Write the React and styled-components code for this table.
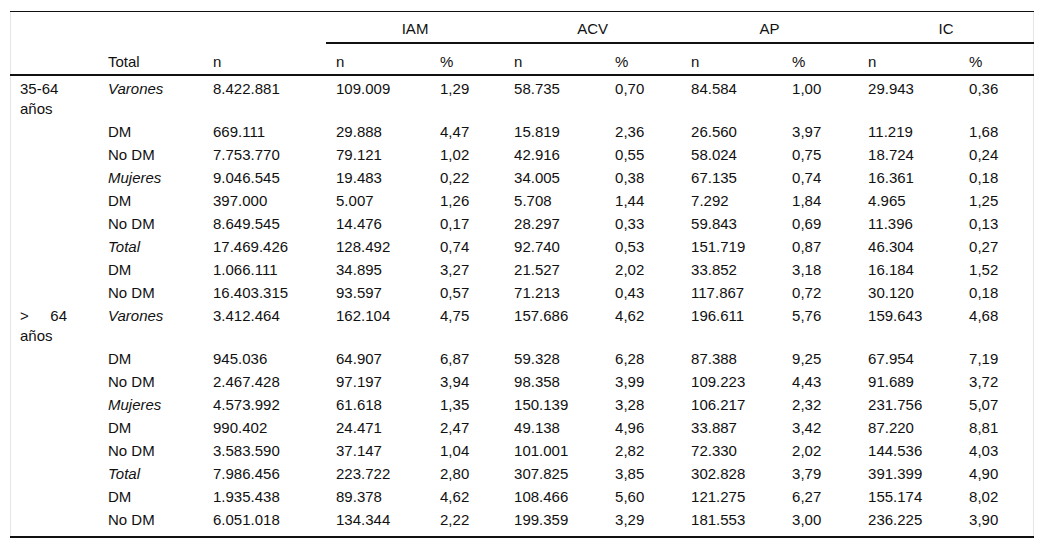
import React from 'react'
import styled, { createGlobalStyle } from 'styled-components'

const GlobalStyle = createGlobalStyle`
body {
    margin: 0;
    background: #fff;
    font-family: "Liberation Sans", Arial, sans-serif;
    color: #111;
}
`

const widths = [88, 105, 123, 104, 74, 101, 76, 101, 76, 101, 75]
const groups = ['IAM', 'ACV', 'AP', 'IC']

const rows = [
    ['35-64 años', 'Varones', '8.422.881', '109.009', '1,29', '58.735', '0,70', '84.584', '1,00', '29.943', '0,36'],
    ['', 'DM', '669.111', '29.888', '4,47', '15.819', '2,36', '26.560', '3,97', '11.219', '1,68'],
    ['', 'No DM', '7.753.770', '79.121', '1,02', '42.916', '0,55', '58.024', '0,75', '18.724', '0,24'],
    ['', 'Mujeres', '9.046.545', '19.483', '0,22', '34.005', '0,38', '67.135', '0,74', '16.361', '0,18'],
    ['', 'DM', '397.000', '5.007', '1,26', '5.708', '1,44', '7.292', '1,84', '4.965', '1,25'],
    ['', 'No DM', '8.649.545', '14.476', '0,17', '28.297', '0,33', '59.843', '0,69', '11.396', '0,13'],
    ['', 'Total', '17.469.426', '128.492', '0,74', '92.740', '0,53', '151.719', '0,87', '46.304', '0,27'],
    ['', 'DM', '1.066.111', '34.895', '3,27', '21.527', '2,02', '33.852', '3,18', '16.184', '1,52'],
    ['', 'No DM', '16.403.315', '93.597', '0,57', '71.213', '0,43', '117.867', '0,72', '30.120', '0,18'],
    ['> 64 años', 'Varones', '3.412.464', '162.104', '4,75', '157.686', '4,62', '196.611', '5,76', '159.643', '4,68'],
    ['', 'DM', '945.036', '64.907', '6,87', '59.328', '6,28', '87.388', '9,25', '67.954', '7,19'],
    ['', 'No DM', '2.467.428', '97.197', '3,94', '98.358', '3,99', '109.223', '4,43', '91.689', '3,72'],
    ['', 'Mujeres', '4.573.992', '61.618', '1,35', '150.139', '3,28', '106.217', '2,32', '231.756', '5,07'],
    ['', 'DM', '990.402', '24.471', '2,47', '49.138', '4,96', '33.887', '3,42', '87.220', '8,81'],
    ['', 'No DM', '3.583.590', '37.147', '1,04', '101.001', '2,82', '72.330', '2,02', '144.536', '4,03'],
    ['', 'Total', '7.986.456', '223.722', '2,80', '307.825', '3,85', '302.828', '3,79', '391.399', '4,90'],
    ['', 'DM', '1.935.438', '89.378', '4,62', '108.466', '5,60', '121.275', '6,27', '155.174', '8,02'],
    ['', 'No DM', '6.051.018', '134.344', '2,22', '199.359', '3,29', '181.553', '3,00', '236.225', '3,90'],
]

const italicLabels = ['Varones', 'Mujeres', 'Total']

function App() {
    return (
        <>
            <GlobalStyle />
            <Frame>
                <Table>
                    <colgroup>
                        {widths.map((w, i) => <col key={i} style={{ width: w }} />)}
                    </colgroup>
                    <thead>
                        <tr>
                            <GroupHead colSpan={3} />
                            {groups.map(g => (
                                <GroupHead key={g} colSpan={2} underline>{g}</GroupHead>
                            ))}
                        </tr>
                        <HeadRow>
                            <Head />
                            <Head>Total</Head>
                            <Head>n</Head>
                            {groups.map(g => (
                                <React.Fragment key={g}>
                                    <Head>n</Head>
                                    <Head>%</Head>
                                </React.Fragment>
                            ))}
                        </HeadRow>
                    </thead>
                    <tbody>
                        {rows.map((row, r) => (
                            <BodyRow key={r}>
                                <AgeCell>{row[0]}</AgeCell>
                                <Cell italic={italicLabels.includes(row[1])}>{row[1]}</Cell>
                                {row.slice(2).map((v, i) => <Cell key={i}>{v}</Cell>)}
                            </BodyRow>
                        ))}
                    </tbody>
                </Table>
            </Frame>
        </>
    )
}

const Frame = styled.div`
margin: 11px 0 0 10px;
width: 1024px;
box-shadow: inset 1px 0 0 #e6e6e6, inset -1px 0 0 #e6e6e6;
`
const Table = styled.table`
width: 100%;
table-layout: fixed;
border-collapse: collapse;
border-top: 1px solid #111;
border-bottom: 2px solid #111;
font-size: 15px;
line-height: 20px;
`
const Head = styled.th`
font-weight: normal;
text-align: left;
padding: 8px 10px 2px;
`
const GroupHead = styled.th`
font-weight: normal;
text-align: center;
padding: 7px 10px 3px;
border-bottom: ${p => (p.underline ? '2px solid #111' : 'none')};
`
const HeadRow = styled.tr`
border-bottom: 2px solid #111;
`
const BodyRow = styled.tr`
    &:last-child td {
        padding-bottom: 6px;
    }
`
const Cell = styled.td`
padding: 3px 10px 0;
vertical-align: top;
white-space: nowrap;
font-style: ${p => (p.italic ? 'italic' : 'normal')};
`
const AgeCell = styled.td`
padding: 3px 31px 0 10px;
vertical-align: top;
text-align: justify;
`

export default App
